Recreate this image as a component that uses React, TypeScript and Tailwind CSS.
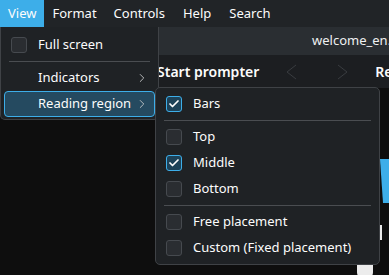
import { Check, ChevronRight } from 'lucide-react';

const font = { fontFamily: '"Noto Sans", "Open Sans", sans-serif' };

function Box({ checked }: { checked?: boolean }) {
  return checked ? (
    <span className="flex h-4 w-4 shrink-0 items-center justify-center rounded-[3px] border border-[#3daee9] bg-[#1d4258]">
      <Check size={12} strokeWidth={3.5} className="text-[#fcfcfc]" />
    </span>
  ) : (
    <span className="block h-4 w-4 shrink-0 rounded-[3px] border border-[#464a4f] bg-[#2a2d31]" />
  );
}

function Item({ label, checked, box, arrow, active }: {
  label: string; checked?: boolean; box?: boolean; arrow?: boolean; active?: boolean;
}) {
  return (
    <div
      className={`flex h-[26px] items-center rounded-[4px] border pl-[6px] pr-[5px] ${
        active ? 'border-[#3daee9] bg-[#254a60]' : 'border-transparent'
      }`}
    >
      <span className="block w-4 shrink-0">{box && <Box checked={checked} />}</span>
      <span className="ml-[11px] flex-1 whitespace-nowrap text-[13px] text-[#fcfcfc]">{label}</span>
      {arrow && <ChevronRight size={14} strokeWidth={1.5} className="text-[#c8cacc]" />}
    </div>
  );
}

function Sep() {
  return (
    <div className="flex h-[7px] items-center px-[5px]">
      <div className="h-px w-full bg-[#4a4d51]" />
    </div>
  );
}

function Chevron({ left }: { left?: boolean }) {
  return (
    <svg width="11" height="16" viewBox="0 0 11 16" className="text-[#393c40]">
      <polyline
        points={left ? '10,1 1,8 10,15' : '1,1 10,8 1,15'}
        fill="none"
        stroke="currentColor"
        strokeWidth="1"
      />
    </svg>
  );
}

export default function App() {
  return (
    <div className="relative h-[275px] w-[389px] overflow-hidden bg-[#0e0e0e]" style={font}>
      {/* Menu bar */}
      <div className="flex h-[27px] items-stretch bg-[#212427] text-[13px] text-[#fcfcfc]">
        <div className="flex items-center bg-[#3daee9] px-2">View</div>
        <div className="flex items-center pl-[8px] pr-[9px]">Format</div>
        <div className="flex items-center pl-[8px] pr-[9px]">Controls</div>
        <div className="flex items-center pl-[9px] pr-[9px]">Help</div>
        <div className="flex items-center px-[9px]">Search</div>
      </div>

      {/* Title strip */}
      <div className="flex h-[28px] items-center bg-[#2a2e32] text-[13px] text-[#eff0f1]">
        <span className="ml-[312px] whitespace-nowrap">welcome_en.</span>
      </div>

      {/* Toolbar row */}
      <div className="flex h-[33px] items-center bg-[#1c1e21] text-[14px] text-[#fcfcfc]">
        <span className="ml-[157px] whitespace-nowrap font-semibold">Start prompter</span>
        <span className="ml-[27px]"><Chevron left /></span>
        <span className="ml-[40px]"><Chevron /></span>
        <span className="ml-[27px] whitespace-nowrap font-semibold">Re</span>
      </div>

      {/* Background bits */}
      <div className="absolute left-[380px] top-[159px] h-[44px] w-[12px] bg-[#3daee9] [clip-path:polygon(0_0,100%_0,100%_100%,3px_100%)]" />
      <div className="absolute left-[380px] top-[225px] h-[15px] w-[2px] bg-[#e8e8e8]" />
      <div className="absolute left-[357px] top-[262px] h-[18px] w-[16px] rounded-b-full bg-[#ececec]" />

      {/* View menu */}
      <div className="absolute left-0 top-[27px] w-[159px] rounded-b-[5px] border border-t-0 border-[#3f4246] bg-[#1f2225] px-[3px] pb-[2px] pt-[5px]">
        <Item label="Full screen" box />
        <Sep />
        <Item label="Indicators" arrow />
        <Item label="Reading region" arrow active />
      </div>

      {/* Reading region submenu */}
      <div className="absolute left-[155px] top-[87px] w-[225px] rounded-[5px] border border-[#3f4246] bg-[#1f2225] px-[3px] pb-[3px] pt-[3px]">
        <Item label="Bars" box checked />
        <Sep />
        <Item label="Top" box />
        <Item label="Middle" box checked />
        <Item label="Bottom" box />
        <Sep />
        <Item label="Free placement" box />
        <Item label="Custom (Fixed placement)" box />
      </div>
    </div>
  );
}
